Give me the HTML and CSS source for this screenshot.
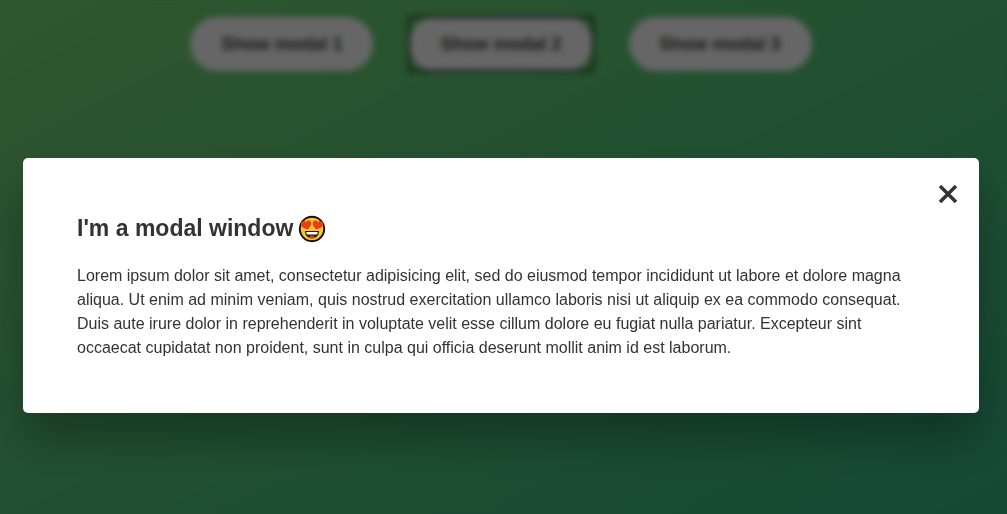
FILE: index.html
```html
<!DOCTYPE html>
<html lang="en">
<head>
<meta charset="utf-8">
<meta name="viewport" content="width=device-width, initial-scale=1">
<title>Modal window</title>
<link rel="stylesheet" href="styles.css">
</head>
<body>
<main class="page">
  <button class="show-modal" type="button"><span class="show-modal-label">Show modal 1</span></button>
  <button class="show-modal show-modal--focused" type="button"><span class="show-modal-label">Show modal 2</span></button>
  <button class="show-modal" type="button"><span class="show-modal-label">Show modal 3</span></button>
</main>
<div class="overlay">
  <section class="modal" role="dialog" aria-modal="true" aria-labelledby="modal-title">
    <button class="close-modal" type="button" aria-label="Close">
      <svg class="close-icon" viewBox="0 0 20 20" aria-hidden="true"><path d="M2 2 18 18M18 2 2 18"/></svg>
    </button>
    <h1 class="modal-title" id="modal-title">I'm a modal window
      <svg class="emoji" viewBox="0 0 28 28" role="img" aria-label="Heart eyes">
        <circle cx="14" cy="14" r="12.2" fill="#fcc13a" stroke="#111" stroke-width="1.9"/>
        <path d="M9.700 14.500C5.800 13.500 2.500 11.600 2.800 8.500c.3-2.600 3.700-3.300 5.200-1.100 1-2.500 4.600-2.500 5.200.2.500 2.700-1.300 5.200-3.500 6.900Z" fill="#ee3d10"/>
        <path d="M18.300 14.500c3.900-1 7.200-2.900 6.900-6-.3-2.600-3.700-3.300-5.200-1.100-1-2.500-4.600-2.500-5.200.2-.5 2.700 1.300 5.200 3.500 6.900Z" fill="#ee3d10"/>
        <path d="M7 16.100h14c0 4.500-2.800 7.300-7 7.300s-7-2.800-7-7.300Z" fill="#241a16"/>
        <path d="M8.300 16.900h11.400c0 1.200-.3 2-.8 2.700H9.100c-.5-.7-.8-1.500-.8-2.700Z" fill="#fff"/>
        <path d="M10.600 21.900c1.500-1.700 5.300-1.700 6.800 0-1.800 1.300-5 1.300-6.800 0Z" fill="#dc4a25"/>
      </svg>
    </h1>
    <p class="modal-text">Lorem ipsum dolor sit amet, consectetur adipisicing elit, sed do eiusmod tempor incididunt ut labore et dolore magna aliqua. Ut enim ad minim veniam, quis nostrud exercitation ullamco laboris nisi ut aliquip ex ea commodo consequat. Duis aute irure dolor in reprehenderit in voluptate velit esse cillum dolore eu fugiat nulla pariatur. Excepteur sint occaecat cupidatat non proident, sunt in culpa qui officia deserunt mollit anim id est laborum.</p>
  </section>
</div>
</body>
</html>
```
FILE: styles.css
```css
* {
  box-sizing: border-box;
  margin: 0;
  padding: 0;
}

body {
  min-height: 100vh;
  background: linear-gradient(to top left, #32b786, #78d870);
  color: #333;
  font-family: "Liberation Sans", Arial, sans-serif;
  font-size: 16px;
  line-height: 24px;
}

.page {
  display: flex;
  justify-content: center;
  gap: 36px;
  padding: 17px 28px 17px 23px;
}

.show-modal {
  border: none;
  background: none;
  color: #444;
  font: bold 18px/22px "Liberation Sans", Arial, sans-serif;
  cursor: pointer;
}

.show-modal-label {
  display: block;
  padding: 16px 31px;
  border-radius: 27px;
  background: #fff;
}

.show-modal--focused {
  border-radius: 2px;
  outline: 2px solid #222;
  outline-offset: -1px;
}

.overlay {
  position: fixed;
  inset: 0;
  display: flex;
  align-items: center;
  padding: 57px 28px 0 23px;
  background: rgba(0, 0, 0, 0.6);
  backdrop-filter: blur(3px);
}

.modal {
  position: relative;
  width: 100%;
  padding: 54px 54px 53px;
  border-radius: 5px;
  background: #fff;
  box-shadow: 0 27px 45px rgba(0, 0, 0, 0.3);
}

.modal-title {
  display: flex;
  align-items: center;
  gap: 5px;
  margin-bottom: 19px;
  font-size: 23px;
  line-height: 33px;
}

.emoji {
  width: 28px;
  height: 28px;
}

.modal-text {
  font-size: 16px;
}

.close-modal {
  position: absolute;
  top: 26px;
  right: 21px;
  width: 20px;
  height: 20px;
  border: none;
  background: none;
  cursor: pointer;
}

.close-icon {
  display: block;
  width: 20px;
  height: 20px;
  fill: none;
  stroke: #333;
  stroke-width: 3.5;
}
```
